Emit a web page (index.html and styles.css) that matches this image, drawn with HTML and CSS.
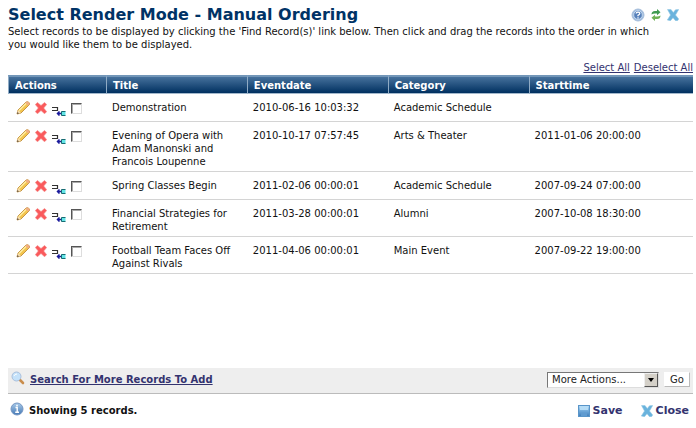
FILE: index.html
```html
<!DOCTYPE html>
<html lang="en">
<head>
  <meta charset="UTF-8">
  <title>Select Render Mode - Manual Ordering</title>
  <meta name="viewport" content="width=device-width, initial-scale=1.0">
  <link rel="stylesheet" href="styles.css">
</head>
<body>
  <!-- shared icons -->
  <svg class="sprite" aria-hidden="true">
    <defs>
      <linearGradient id="blue" x1="0" y1="0" x2="0" y2="1">
        <stop offset="0" stop-color="#a9cbea"/>
        <stop offset="1" stop-color="#4478b5"/>
      </linearGradient>
      <linearGradient id="disk" x1="0" y1="0" x2="0" y2="1">
        <stop offset="0" stop-color="#b5dcf6"/>
        <stop offset=".5" stop-color="#6fa9da"/>
        <stop offset="1" stop-color="#3f7dba"/>
      </linearGradient>
    </defs>
    <symbol id="pencil" viewBox="0 0 14 14">
      <path d="M1 13 L2 9 L10 1 Q12 0 13.500 2 Q14 3 13 4 L5 12 Z" fill="#f3c54e" stroke="#b9822b" stroke-width=".8"/>
      <path d="M3 9.500 L10.500 2" stroke="#fff0a8" stroke-width="1.300"/>
      <path d="M10 1 Q12 0 13.500 2 Q14 3 13 4 L12 4.500 L9.500 2 Z" fill="#f0ad83"/>
      <path d="M1 13 L2 9 L5 12 Z" fill="#f6dfb5"/>
      <path d="M1 13 L1.500 11 L3 12.500 Z" fill="#554433"/>
    </symbol>
    <symbol id="delete" viewBox="0 0 12 12">
      <path d="M2.500 .5 L6 3.500 L9.500 .5 L11.700 2.500 L8.700 6 L11.700 9.700 L9.500 11.700 L6 8.500 L2.500 11.700 L.3 9.700 L3.300 6 L.3 2.500 Z" fill="#fa5a5c" stroke="#f48a88" stroke-width=".6"/>
    </symbol>
    <symbol id="move" viewBox="0 0 14 10">
      <path d="M0 1.500 H5.500 V4.500 H0" fill="none" stroke="#333" stroke-width="1.200"/>
      <path d="M5 7.500 H9 M7.500 5.500 L5.500 7.500 L7.500 9.500" fill="none" stroke="#1a1a9c" stroke-width="1.500"/>
      <path d="M13.500 5.500 H9.500 V9.500 H13.500" fill="#62e4e6" stroke="#176b72"/>
    </symbol>
    <symbol id="close" viewBox="0 0 12 12">
      <path d="M.5 .5 H4 L6.300 3.500 L8.500 .8 L11.700 .5 L8.500 6 L11.700 10 L10.500 11.700 H8.500 L6 8.700 L3.500 11.700 L.3 11 L3.500 6 Z" fill="#6ab3dd" stroke="#93c9e6" stroke-width=".6"/>
    </symbol>
    <symbol id="help" viewBox="0 0 14 14">
      <circle cx="7" cy="7" r="6" fill="#9dbbe0" stroke="#a8bfdb"/>
      <circle cx="7" cy="7" r="4.300" fill="#5580bb" stroke="#d5e4f3" stroke-width=".8"/>
      <path d="M5.200 5.500 Q5.200 4.200 7 4.200 Q8.800 4.200 8.800 5.500 Q8.800 6.500 7 7.300 V8.300 M7 9.300 V10.500" fill="none" stroke="#fff" stroke-width="1.300"/>
    </symbol>
    <symbol id="refresh" viewBox="0 0 12 12">
      <path d="M1.500 5.500 Q1.500 2 5 2 H7 V0 L10.500 3.300 L7 6.300 V4.500 H5 Q3 4.500 1.500 5.500 Z" fill="#3f9a50"/>
      <path d="M10.500 6.500 Q10.500 10 7 10 H5 V12 L1.500 8.700 L5 5.700 V7.500 H7 Q9 7.500 10.500 6.500 Z" fill="#6fb255"/>
    </symbol>
    <symbol id="search" viewBox="0 0 14 14">
      <path d="M8.500 8.500 L12 12" stroke="#c98d4c" stroke-width="2.600" stroke-linecap="round"/>
      <circle cx="5.500" cy="5.500" r="4.500" fill="#c5e2fa" stroke="#a9bfdc"/>
      <path d="M3 5 Q3.500 3 6 3" fill="none" stroke="#fff"/>
    </symbol>
    <symbol id="info" viewBox="0 0 14 14">
      <circle cx="7" cy="7" r="6" fill="url(#blue)" stroke="#7596c2"/>
      <path d="M5.500 5.500 H7.200 V10 M5.200 10.300 H9 M6.200 3.500 H7.800" fill="none" stroke="#fff" stroke-width="1.400"/>
    </symbol>
    <symbol id="save" viewBox="0 0 12 12">
      <rect x=".5" y=".5" width="11" height="11" fill="url(#disk)" stroke="#5995c9"/>
      <rect x="2" y="1" width="8" height="4" fill="#b5dcf6"/>
      <rect x="3" y="8" width="6" height="3" fill="#5f9bd0"/>
    </symbol>
  </svg>

  <header class="page-header">
    <div class="title-row">
      <h1>Select Render Mode - Manual Ordering</h1>
      <div class="tools">
        <button type="button" class="icon-button" aria-label="Help"><svg class="icon-large"><use href="#help"/></svg></button>
        <button type="button" class="icon-button" aria-label="Refresh"><svg class="icon"><use href="#refresh"/></svg></button>
        <button type="button" class="icon-button" aria-label="Close window"><svg class="icon"><use href="#close"/></svg></button>
      </div>
    </div>
    <p class="intro">Select records to be displayed by clicking the 'Find Record(s)' link below. Then click and drag the records into the order in which you would like them to be displayed.</p>
  </header>

  <main class="records">
    <div class="select-links">
      <a href="#">Select All</a>
      <a href="#">Deselect All</a>
    </div>
    <table class="records-table">
      <thead>
        <tr>
          <th class="col-actions">Actions</th>
          <th>Title</th>
          <th>Eventdate</th>
          <th>Category</th>
          <th class="col-start">Starttime</th>
        </tr>
      </thead>
      <tbody>
        <tr>
          <td>
            <div class="actions">
              <button type="button" class="icon-button" aria-label="Edit"><svg class="icon-large"><use href="#pencil"/></svg></button>
              <button type="button" class="icon-button" aria-label="Delete"><svg class="icon"><use href="#delete"/></svg></button>
              <button type="button" class="icon-button" aria-label="Move"><svg class="icon-move"><use href="#move"/></svg></button>
              <input type="checkbox" aria-label="Select Demonstration">
            </div>
          </td>
          <td>Demonstration</td>
          <td>2010-06-16 10:03:32</td>
          <td>Academic Schedule</td>
          <td></td>
        </tr>
        <tr>
          <td>
            <div class="actions">
              <button type="button" class="icon-button" aria-label="Edit"><svg class="icon-large"><use href="#pencil"/></svg></button>
              <button type="button" class="icon-button" aria-label="Delete"><svg class="icon"><use href="#delete"/></svg></button>
              <button type="button" class="icon-button" aria-label="Move"><svg class="icon-move"><use href="#move"/></svg></button>
              <input type="checkbox" aria-label="Select Evening of Opera">
            </div>
          </td>
          <td>Evening of Opera with Adam Manonski and Francois Loupenne</td>
          <td>2010-10-17 07:57:45</td>
          <td>Arts &amp; Theater</td>
          <td>2011-01-06 20:00:00</td>
        </tr>
        <tr>
          <td>
            <div class="actions">
              <button type="button" class="icon-button" aria-label="Edit"><svg class="icon-large"><use href="#pencil"/></svg></button>
              <button type="button" class="icon-button" aria-label="Delete"><svg class="icon"><use href="#delete"/></svg></button>
              <button type="button" class="icon-button" aria-label="Move"><svg class="icon-move"><use href="#move"/></svg></button>
              <input type="checkbox" aria-label="Select Spring Classes Begin">
            </div>
          </td>
          <td>Spring Classes Begin</td>
          <td>2011-02-06 00:00:01</td>
          <td>Academic Schedule</td>
          <td>2007-09-24 07:00:00</td>
        </tr>
        <tr>
          <td>
            <div class="actions">
              <button type="button" class="icon-button" aria-label="Edit"><svg class="icon-large"><use href="#pencil"/></svg></button>
              <button type="button" class="icon-button" aria-label="Delete"><svg class="icon"><use href="#delete"/></svg></button>
              <button type="button" class="icon-button" aria-label="Move"><svg class="icon-move"><use href="#move"/></svg></button>
              <input type="checkbox" aria-label="Select Financial Strategies">
            </div>
          </td>
          <td>Financial Strategies for Retirement</td>
          <td>2011-03-28 00:00:01</td>
          <td>Alumni</td>
          <td>2007-10-08 18:30:00</td>
        </tr>
        <tr>
          <td>
            <div class="actions">
              <button type="button" class="icon-button" aria-label="Edit"><svg class="icon-large"><use href="#pencil"/></svg></button>
              <button type="button" class="icon-button" aria-label="Delete"><svg class="icon"><use href="#delete"/></svg></button>
              <button type="button" class="icon-button" aria-label="Move"><svg class="icon-move"><use href="#move"/></svg></button>
              <input type="checkbox" aria-label="Select Football Team">
            </div>
          </td>
          <td>Football Team Faces Off Against Rivals</td>
          <td>2011-04-06 00:00:01</td>
          <td>Main Event</td>
          <td>2007-09-22 19:00:00</td>
        </tr>
      </tbody>
    </table>
  </main>

  <div class="search-bar">
    <svg class="icon-large bar-icon"><use href="#search"/></svg>
    <a href="#">Search For More Records To Add</a>
    <form class="more-actions">
      <div class="select-box">
        <select aria-label="More Actions">
          <option>More Actions...</option>
        </select>
        <span class="select-arrow"></span>
      </div>
      <button type="button" class="go-button">Go</button>
    </form>
  </div>

  <footer class="status-bar">
    <svg class="icon-large bar-icon"><use href="#info"/></svg>
    <span class="status-text">Showing 5 records.</span>
    <div class="footer-buttons">
      <button type="button" class="text-button"><svg class="icon"><use href="#save"/></svg>Save</button>
      <button type="button" class="text-button"><svg class="icon"><use href="#close"/></svg>Close</button>
    </div>
  </footer>
</body>
</html>
```

FILE: styles.css
```css
* {
  box-sizing: border-box;
}

body {
  display: flex;
  flex-direction: column;
  min-height: 100vh;
  margin: 0;
  padding: 4px 3px 9px 8px;
  background: #fff;
  color: #111;
  font-family: Verdana, "DejaVu Sans", sans-serif;
  font-size: 10px;
  line-height: 13px;
}

a {
  color: #33336f;
}

button {
  font-family: inherit;
  cursor: pointer;
}

svg {
  display: block;
}

.sprite {
  position: absolute;
  width: 0;
  height: 0;
}

.icon {
  width: 12px;
  height: 12px;
}

.icon-large {
  width: 14px;
  height: 14px;
}

.icon-move {
  width: 14px;
  height: 10px;
}

.icon-button {
  padding: 0;
  border: 0;
  background: none;
}

/* header */
.title-row {
  display: flex;
  justify-content: space-between;
  align-items: center;
}

h1 {
  margin: 0;
  color: #003366;
  font-size: 16px;
  line-height: 21px;
}

.tools {
  display: flex;
  align-items: center;
  gap: 5px;
  padding-right: 14px;
}

.intro {
  margin: 0;
  padding-right: 28px;
}

/* records */
.records {
  flex: 1;
}

.select-links {
  display: flex;
  justify-content: flex-end;
  gap: 4px;
  padding: 10px 0 1px;
}

.records-table {
  width: 100%;
  table-layout: fixed;
  border-collapse: separate;
  border-spacing: 0;
}

th {
  height: 18px;
  padding: 2px 5px 1px 6px;
  border-left: 1px solid #8fabc5;
  border-top: 2px solid #7296b8;
  border-bottom: 1px solid #a3b8cc;
  background: linear-gradient(#46719c, #003060);
  color: #fff;
  text-align: left;
}

.col-actions {
  width: 98px;
}

.col-start {
  width: 24%;
}

td {
  padding: 7px 6px 3px;
  border-bottom: 1px solid #d4d4d4;
  vertical-align: top;
}

.actions {
  display: flex;
  align-items: center;
  gap: 5px;
  height: 17px;
  padding: 0 0 3px 2px;
}

.actions .icon-move {
  margin-top: 5px;
}

.actions input {
  appearance: none;
  width: 11px;
  height: 11px;
  margin: 0;
  border: 1px solid;
  border-color: #555 #ddd #ddd #555;
  background: #fff;
  box-shadow: inset 1px 1px #aaa;
}

/* search bar */
.search-bar {
  display: flex;
  align-items: center;
  height: 26px;
  padding: 0 3px 2px 3px;
  border-bottom: 1px solid #bbb;
  background: #eee;
}

.search-bar > a {
  margin-left: 5px;
  font-weight: bold;
}

.bar-icon {
  margin-bottom: 3px;
}

.more-actions {
  display: flex;
  align-items: center;
  gap: 5px;
  margin-left: auto;
}

.select-box {
  position: relative;
}

.select-box select {
  appearance: none;
  display: block;
  width: 112px;
  height: 16px;
  padding: 0 18px 0 4px;
  border: 1px solid;
  border-color: #777 #ddd #ddd #777;
  border-radius: 0;
  background: #fff;
  color: #222;
  font: inherit;
}

.select-arrow {
  position: absolute;
  top: 1px;
  right: 1px;
  width: 14px;
  height: 14px;
  border: 1px solid;
  border-color: #eee #555 #555 #eee;
  background: #d4d0c8;
  pointer-events: none;
}

.select-arrow::after {
  content: "";
  position: absolute;
  top: 4px;
  left: 3px;
  border: 3px solid transparent;
  border-top: 4px solid #000;
  border-bottom: 0;
}

.go-button {
  width: 26px;
  height: 15px;
  padding: 0;
  border: 1px solid;
  border-color: #fff #bbb #bbb #fff;
  background: #fff;
  color: #222;
  font-size: 10px;
  line-height: 13px;
}

/* status bar */
.status-bar {
  display: flex;
  align-items: center;
  padding: 8px 4px 0 2px;
  font-weight: bold;
}

.status-text {
  margin-left: 5px;
}

.footer-buttons {
  display: flex;
  gap: 18px;
  margin-left: auto;
}

.text-button {
  display: flex;
  align-items: center;
  gap: 3px;
  padding: 0;
  border: 0;
  background: none;
  color: #33336f;
  font-size: 11px;
  font-weight: bold;
}
```
